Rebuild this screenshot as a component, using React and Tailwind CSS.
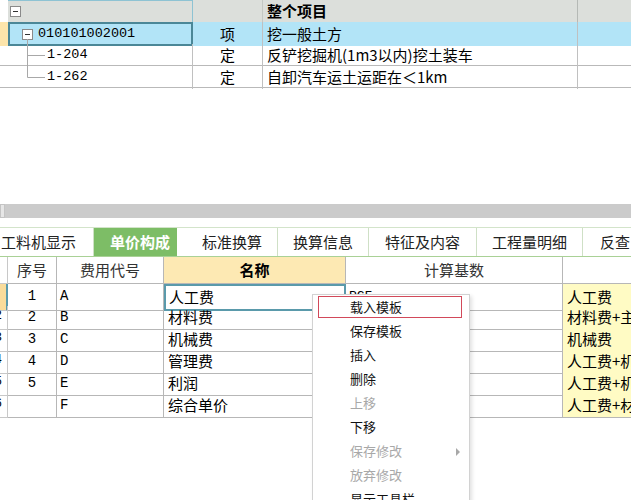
import React from 'react';

const cjk = { fontFamily: '"Noto Sans CJK SC", "Liberation Sans", sans-serif' };
const mono = { fontFamily: '"Liberation Mono", "Noto Sans CJK SC", monospace' };

const tabs = [
  { label: '工料机显示', w: 'w-[94px]', cls: 'justify-end pr-[17px] border-r border-[#cfe0c6]' },
  { label: '单价构成', w: 'w-[83px]', active: true },
  { label: '标准换算', w: 'w-[101px]', cls: 'justify-center pl-[10px] border-r border-[#cfe0c6]' },
  { label: '换算信息', w: 'w-[91px]', cls: 'justify-center border-r border-[#cfe0c6]' },
  { label: '特征及内容', w: 'w-[108px]', cls: 'justify-center border-r border-[#cfe0c6]' },
  { label: '工程量明细', w: 'w-[106px]', cls: 'justify-center border-r border-[#cfe0c6]' },
  { label: '反查', w: 'w-[80px]', cls: 'justify-start pl-[17px]' },
];

// only the first row's base peeks out from under the menu
const costRows = [
  { idx: '1', code: 'A', name: '人工费', base: 'RGF', basis: '人工费' },
  { idx: '2', code: 'B', name: '材料费', base: '', basis: '材料费+主材费+设备费' },
  { idx: '3', code: 'C', name: '机械费', base: '', basis: '机械费' },
  { idx: '4', code: 'D', name: '管理费', base: '', basis: '人工费+机械费' },
  { idx: '5', code: 'E', name: '利润', base: '', basis: '人工费+机械费' },
  { idx: '', code: 'F', name: '综合单价', base: '', basis: '人工费+材料费+机械费' },
];

const menuItems = [
  { label: '载入模板', focus: true },
  { label: '保存模板' },
  { label: '插入' },
  { label: '删除' },
  { label: '上移', disabled: true },
  { label: '下移' },
  { label: '保存修改', disabled: true, sub: true },
  { label: '放弃修改', disabled: true },
  { label: '显示工具栏' },
];

function MinusBox() {
  return (
    <span className="flex h-[11px] w-[11px] items-center justify-center border border-[#8a8a8a] bg-white">
      <span className="h-px w-[5px] bg-[#333]" />
    </span>
  );
}

function TopTable() {
  const grid = 'grid grid-cols-[8px_185px_70px_315px_1fr]';
  return (
    <div className="relative text-[15px] text-black" style={cjk}>
      {/* header */}
      <div className={`${grid} h-[22px] border-b border-[#b9bdb9]`}>
        <div className="bg-white" />
        <div className="flex items-center border-r border-t border-[#8ec3d3] bg-[#dcdfdb] pl-[2px]">
          <MinusBox />
        </div>
        <div className="border-r border-[#c4c8c4] bg-[#dcdfdb]" />
        <div className="flex items-center border-r border-[#b5b9b5] bg-[#dcdfdb] pl-[4px] font-bold">整个项目</div>
        <div className="bg-[#dcdfdb]" />
      </div>
      {/* selected row */}
      <div className={`${grid} h-[22px] border-b border-[#b9b9b9]`}>
        <div className="bg-[#fde5ab]" />
        <div className="flex items-center gap-[5px] border-2 border-[#4b8797] bg-[#b2e4f7] pl-[12px]">
          <MinusBox />
          <span className="text-[13.5px]" style={mono}>010101002001</span>
        </div>
        <div className="flex items-center justify-center border-r border-[#c0c0c0] bg-[#b2e4f7]">项</div>
        <div className="flex items-center border-r border-[#c0c0c0] bg-[#b2e4f7] pl-[4px]">挖一般土方</div>
        <div className="bg-[#b2e4f7]" />
      </div>
      {[
        { code: '1-204', type: '定', name: '反铲挖掘机(1m3以内)挖土装车' },
        { code: '1-262', type: '定', name: '自卸汽车运土运距在＜1km' },
      ].map((r) => (
        <div key={r.code} className={`${grid} h-[22px] border-b border-[#b9b9b9]`}>
          <div />
          <div className="flex items-center border-r border-[#c0c0c0] pl-[39px]">
            <span className="text-[13.5px]" style={mono}>{r.code}</span>
          </div>
          <div className="flex items-center justify-center border-r border-[#c0c0c0]">{r.type}</div>
          <div className="flex items-center border-r border-[#c0c0c0] pl-[4px]">{r.name}</div>
          <div />
        </div>
      ))}
      {/* tree connector lines */}
      <svg className="absolute left-0 top-0" width="60" height="88" viewBox="0 0 60 88">
        <path d="M27.5 39 V77.5 M27.5 55.5 H45 M27.5 77.5 H45" stroke="#a8a8a8" strokeWidth="1" fill="none" />
      </svg>
    </div>
  );
}

function TabBar() {
  return (
    <div className="flex h-[30px] overflow-hidden border-b border-t border-b-[#a9d196] border-t-[#d3e4ca] text-[15px] text-[#222]" style={cjk}>
      {tabs.map((t) =>
        t.active ? (
          <div key={t.label} className={`${t.w} flex shrink-0 items-center bg-[#7dbd66] pl-[16px] font-bold text-white`}>
            {t.label}
          </div>
        ) : (
          <div key={t.label} className={`${t.w} flex shrink-0 items-center whitespace-nowrap ${t.cls}`}>
            {t.label}
          </div>
        )
      )}
    </div>
  );
}

function CostTable() {
  const grid = 'grid grid-cols-[8px_49px_107px_182px_217px_1fr]';
  const line = 'border-b border-r border-[#b7b7b7]';
  return (
    <div className="text-[15px] text-black" style={cjk}>
      <div className={`${grid} h-[27px] text-[#333]`}>
        <div className="border-b border-r border-[#c8c8c8]" />
        <div className={`${line} flex items-center justify-center`}>序号</div>
        <div className={`${line} flex items-center justify-center`}>费用代号</div>
        <div className={`${line} flex items-center justify-center bg-[#fde9b3] font-bold text-black`}>名称</div>
        <div className={`${line} flex items-center justify-center`}>计算基数</div>
        <div className="border-b border-[#b7b7b7]" />
      </div>
      {costRows.map((r, i) => (
        <div key={r.code} className={`${grid} h-[22px]`}>
          {i === 0 ? (
            <div className="border-b border-r-2 border-b-[#c8c8c8] border-r-[#5a9aab] bg-[#f9dc9b]" />
          ) : (
            <div className="flex justify-end overflow-hidden border-b border-r border-[#c8c8c8] text-[13px]" style={mono}>
              <span className="mr-[5px]">{i + 1}</span>
            </div>
          )}
          <div className={`${line} flex items-center justify-center text-[14px]`} style={mono}>{r.idx}</div>
          <div className={`${line} flex items-center pl-[3px] text-[14px]`} style={mono}>{r.code}</div>
          {i === 0 ? (
            <div className="flex items-center border-2 border-[#5a9aab] pl-[3px]">{r.name}</div>
          ) : (
            <div className={`${line} flex items-center pl-[4px]`}>{r.name}</div>
          )}
          <div className={`${line} flex items-center pl-[3px] text-[13px]`} style={mono}>{r.base}</div>
          <div className="flex items-center overflow-hidden whitespace-nowrap border-b border-[#b7b7b7] bg-[#fffbc4] pl-[4px]">
            {r.basis}
          </div>
        </div>
      ))}
    </div>
  );
}

function ContextMenu() {
  return (
    <div
      className="absolute left-[312px] top-[294px] w-[158px] border border-[#d2d2d2] bg-white pb-2 text-[13px] shadow-[2px_2px_4px_rgba(0,0,0,0.12)]"
      style={cjk}
    >
      {menuItems.map((m) => (
        <div key={m.label} className="flex h-[24px] items-center pl-[5px] pr-[7px]">
          <div
            className={`relative flex h-[22px] flex-1 items-center pl-[31px] ${
              m.focus ? 'border border-[#d2495a]' : 'border border-transparent'
            } ${m.disabled ? 'text-[#a8a8a8]' : 'text-[#111]'}`}
          >
            {m.label}
            {m.sub && (
              <span className="absolute right-[1px] top-[7px] h-0 w-0 border-y-[4px] border-l-[4px] border-y-transparent border-l-[#a8a8a8]" />
            )}
          </div>
        </div>
      ))}
    </div>
  );
}

export default function App() {
  return (
    <div className="relative h-[500px] w-[631px] overflow-hidden bg-white">
      <TopTable />
      <div className="h-[116px]" />
      <div className="flex h-[14px]">
        <div className="w-[5px] border border-[#c4c4c4] bg-[#e6e6e6]" />
        <div className="flex-1 bg-[#cbcbcb]" />
      </div>
      <div className="h-[9px]" />
      <TabBar />
      <CostTable />
      <ContextMenu />
    </div>
  );
}
